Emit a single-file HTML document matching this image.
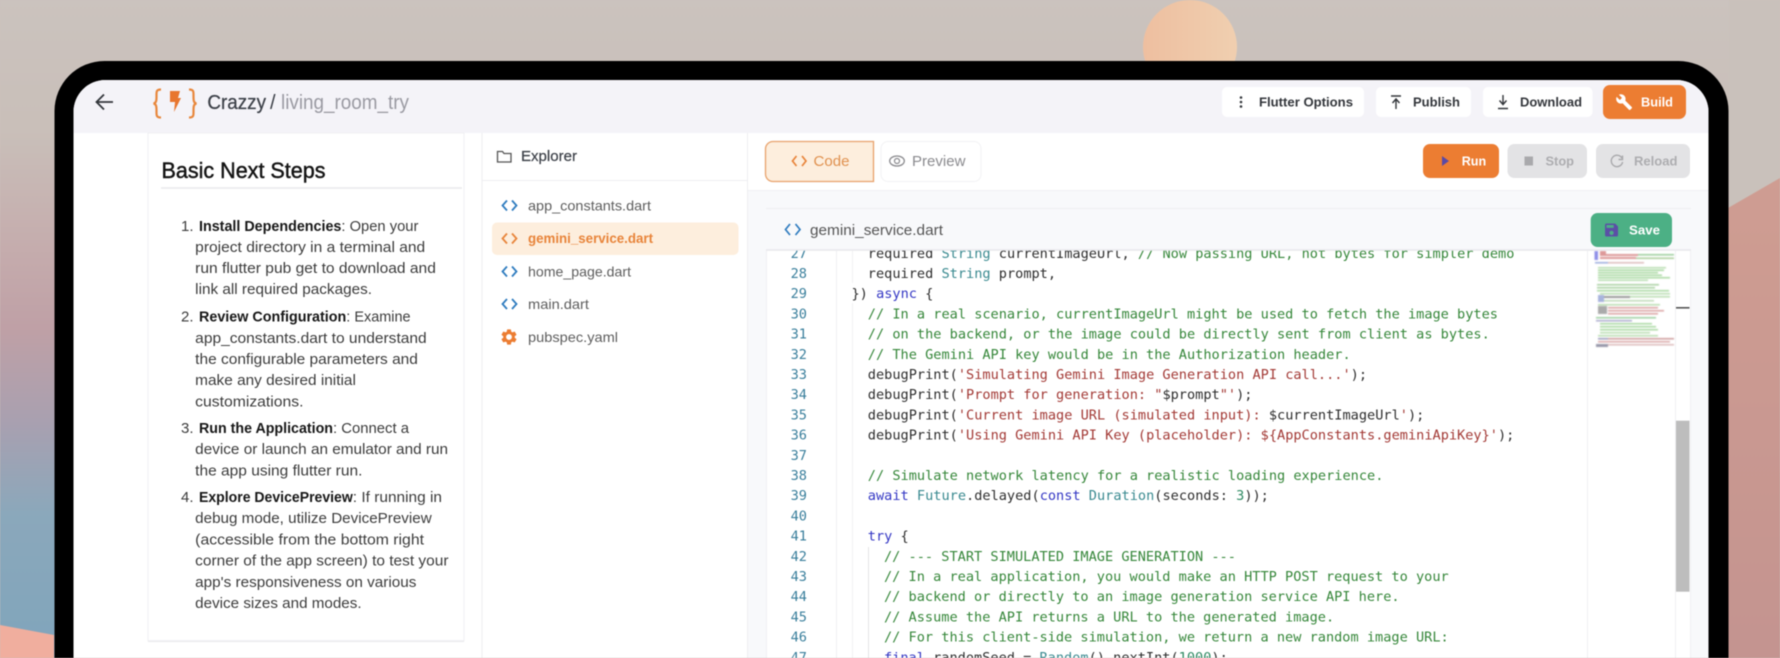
<!DOCTYPE html>
<html><head><meta charset="utf-8"><title>Crazzy</title>
<style>
html,body{margin:0;padding:0;width:1780px;height:658px;overflow:hidden;background:#cbc1bb}
svg{display:block;filter:blur(.5px);font-family:"Liberation Sans",Arial,sans-serif;overflow:hidden}
text{white-space:pre}
.m{font-family:"DejaVu Sans Mono","Liberation Mono",monospace;font-size:13.6px;fill:#2e2e2e}
.n{text-anchor:end;fill:#3a7f9c}
.c{fill:#36873a}.s{fill:#a33a36}.k{fill:#3437c4}.t{fill:#3a8a90}.g{fill:#2f8a63}
.l{font-size:15px;fill:#3c3c3c}
.b{font-size:15px;font-weight:700;fill:#171717}
.f{font-size:14px;fill:#5e5e5e}
.u{font-size:13px;font-weight:700;fill:#33363b}
.w{font-size:13px;font-weight:700;fill:#fff}
.d{font-size:13px;font-weight:700;fill:#adadb0}
</style></head><body>
<svg width="1780" height="658" viewBox="0 0 1780 658" xmlns="http://www.w3.org/2000/svg">
<defs>
<linearGradient id="bg" x1="0" y1="0" x2="0" y2="1">
<stop offset="0" stop-color="#cbc3be"/><stop offset=".2" stop-color="#c9bfb9"/><stop offset=".38" stop-color="#c5acad"/><stop offset=".5" stop-color="#bfa0a6"/><stop offset=".64" stop-color="#a9a0b0"/><stop offset=".78" stop-color="#8ba8bb"/><stop offset="1" stop-color="#80a5bc"/>
</linearGradient>
<linearGradient id="rs" x1="0" y1="0" x2="0" y2="1"><stop offset="0" stop-color="#cf9d92"/><stop offset="1" stop-color="#c49490"/></linearGradient>
<linearGradient id="moon" x1="0" y1="0" x2="1" y2="0"><stop offset="0" stop-color="#eebfa0"/><stop offset="1" stop-color="#f0cfb0"/></linearGradient>
<clipPath id="scr"><path d="M73.500 658V112a32 32 0 0 1 32-32H1676.500a32 32 0 0 1 32 32V658z"/></clipPath>
</defs>
<rect width="1780" height="658" fill="url(#bg)"/>
<rect x="1729" y="0" width="51" height="230" fill="#c9c1bb"/>
<polygon points="0,625 54,635 54,658 0,658" fill="#f0ae9e"/>
<polygon points="1728,208 1780,178 1780,658 1728,658" fill="url(#rs)"/>
<circle cx="1190" cy="47" r="47" fill="url(#moon)"/>
<path d="M54.500 658V111a50 50 0 0 1 50-50H1678.500a50 50 0 0 1 50 50V658z" fill="#000"/>
<g clip-path="url(#scr)">
<rect x="73.500" y="80" width="1635" height="578" fill="#fff"/>
<rect x="73.500" y="80" width="1635" height="53" fill="#f4f3f8"/>
<rect x="748" y="190" width="961" height="468" fill="#f8f9fb"/>
<rect x="748" y="133" width="961" height="57" fill="#fff"/>
<path d="M748 190.500H1709" stroke="#f0f0f3"/>
</g>

<!-- top bar -->
<path d="M113 102H97M104 94.500l-7.500 7.500 7.500 7.500" fill="none" stroke="#33363b" stroke-width="1.800"/>
<g fill="none" stroke="#e8873c" stroke-width="2.200">
<path d="M161 89.500C156 89.500 156.500 92 156.500 96S156.500 103 153.500 103.500C156.500 104 156.500 107 156.500 111S156 117.500 161 117.500"/>
<path d="M189 89.500C194 89.500 193.500 92 193.500 96S193.500 103 196.500 103.500C193.500 104 193.500 107 193.500 111S194 117.500 189 117.500"/>
</g>
<polygon points="170,91 180,91 178,98 181,98 174,112 175,102 170,102" fill="#e8762f"/>
<text x="207.400" y="109" font-size="20" fill="#3c4048" stroke="#3c4048" stroke-width=".25" textLength="58.600" lengthAdjust="spacingAndGlyphs">Crazzy</text>
<text x="270" y="109" font-size="20" fill="#3c4048">/</text>
<text x="281" y="109" font-size="20" fill="#9a9aa2" textLength="128" lengthAdjust="spacingAndGlyphs">living_room_try</text>

<rect x="1222" y="87" width="142" height="30" rx="5" fill="#fff"/>
<circle cx="1241" cy="97.500" r="1.300" fill="#33363b"/><circle cx="1241" cy="102" r="1.300" fill="#33363b"/><circle cx="1241" cy="106.500" r="1.300" fill="#33363b"/>
<text class="u" x="1259" y="106.500" textLength="94" lengthAdjust="spacingAndGlyphs">Flutter Options</text>
<rect x="1376" y="87" width="95" height="30" rx="5" fill="#fff"/>
<path d="M1391 96h10M1396 109v-9M1392.500 103l3.500-4 3.500 4" fill="none" stroke="#33363b" stroke-width="1.400"/>
<text class="u" x="1413" y="106.500" textLength="47" lengthAdjust="spacingAndGlyphs">Publish</text>
<rect x="1483" y="87" width="109.500" height="30" rx="5" fill="#fff"/>
<path d="M1503 95v9M1499.500 100.500l3.500 4 3.500-4M1498 108.500h10" fill="none" stroke="#33363b" stroke-width="1.400"/>
<text class="u" x="1520" y="106.500" textLength="62" lengthAdjust="spacingAndGlyphs">Download</text>
<rect x="1603" y="85" width="83" height="34" rx="7" fill="#ec7d32"/>
<path transform="translate(1615.500,93.500) scale(.72)" fill="#fff" d="M22.700 19l-9.100-9.100c.9-2.300.4-5-1.500-6.900-2-2-5-2.400-7.400-1.300L9 6 6 9 1.600 4.700C.4 7.100.9 10.100 2.900 12.100c1.900 1.900 4.600 2.400 6.900 1.500l9.100 9.100c.4.4 1 .4 1.400 0l2.300-2.300c.5-.4.5-1.100.1-1.400z"/>
<text class="w" x="1641" y="106.500" textLength="32" lengthAdjust="spacingAndGlyphs">Build</text>

<!-- left card -->
<rect x="148" y="133" width="316" height="507.700" fill="#fff" stroke="#f0f0f3"/>
<path d="M148 641.500H464" stroke="#e9e9ec"/>
<text x="161.500" y="178" font-size="22" fill="#141414" stroke="#141414" stroke-width=".45" textLength="164" lengthAdjust="spacingAndGlyphs">Basic Next Steps</text>
<path d="M161 188H462" stroke="#e9e9ec" stroke-width="1.500"/>

<text class="l" x="181" y="231">1.</text>
<text class="b" x="199" y="231" textLength="142.400" lengthAdjust="spacingAndGlyphs">Install Dependencies</text>
<text class="l" x="341.400" y="231" textLength="77" lengthAdjust="spacingAndGlyphs">: Open your</text>
<text class="l" x="195.200" y="252" textLength="230" lengthAdjust="spacingAndGlyphs">project directory in a terminal and</text>
<text class="l" x="195.200" y="273" textLength="240.700" lengthAdjust="spacingAndGlyphs">run flutter pub get to download and</text>
<text class="l" x="195.200" y="294" textLength="176.800" lengthAdjust="spacingAndGlyphs">link all required packages.</text>
<text class="l" x="181" y="321.700">2.</text>
<text class="b" x="199" y="321.700" textLength="147.300" lengthAdjust="spacingAndGlyphs">Review Configuration</text>
<text class="l" x="346.300" y="321.700" textLength="64.300" lengthAdjust="spacingAndGlyphs">: Examine</text>
<text class="l" x="195.200" y="343" textLength="231.500" lengthAdjust="spacingAndGlyphs">app_constants.dart to understand</text>
<text class="l" x="195.200" y="364" textLength="222.700" lengthAdjust="spacingAndGlyphs">the configurable parameters and</text>
<text class="l" x="195.200" y="385" textLength="160.700" lengthAdjust="spacingAndGlyphs">make any desired initial</text>
<text class="l" x="195.200" y="406.700" textLength="108.300" lengthAdjust="spacingAndGlyphs">customizations.</text>
<text class="l" x="181" y="433">3.</text>
<text class="b" x="199" y="433" textLength="134" lengthAdjust="spacingAndGlyphs">Run the Application</text>
<text class="l" x="333" y="433" textLength="76" lengthAdjust="spacingAndGlyphs">: Connect a</text>
<text class="l" x="195.200" y="454" textLength="252.800" lengthAdjust="spacingAndGlyphs">device or launch an emulator and run</text>
<text class="l" x="195.200" y="475.700" textLength="167.200" lengthAdjust="spacingAndGlyphs">the app using flutter run.</text>
<text class="l" x="181" y="502">4.</text>
<text class="b" x="199" y="502" textLength="153.800" lengthAdjust="spacingAndGlyphs">Explore DevicePreview</text>
<text class="l" x="352.800" y="502" textLength="89.200" lengthAdjust="spacingAndGlyphs">: If running in</text>
<text class="l" x="195.200" y="523" textLength="236.500" lengthAdjust="spacingAndGlyphs">debug mode, utilize DevicePreview</text>
<text class="l" x="195.200" y="544.700" textLength="228.800" lengthAdjust="spacingAndGlyphs">(accessible from the bottom right</text>
<text class="l" x="195.200" y="565.700" textLength="253.300" lengthAdjust="spacingAndGlyphs">corner of the app screen) to test your</text>
<text class="l" x="195.200" y="587" textLength="221.200" lengthAdjust="spacingAndGlyphs">app's responsiveness on various</text>
<text class="l" x="195.200" y="608" textLength="166.400" lengthAdjust="spacingAndGlyphs">device sizes and modes.</text>

<!-- explorer -->
<path d="M482 133V658M747.500 133V658" stroke="#eeeef1"/>
<path d="M482 180.500H747" stroke="#eeeef1"/>
<path d="M497.500 151.500h5l1.500 2h7v8.500h-13.500z" fill="none" stroke="#555" stroke-width="1.300"/>
<text x="521" y="161" font-size="14.500" fill="#3c4048" stroke="#3c4048" stroke-width=".2" textLength="56" lengthAdjust="spacingAndGlyphs">Explorer</text>
<rect x="492" y="222.500" width="246.500" height="32.500" rx="5" fill="#fdeedd"/>
<path d="M507 200.500l-4.500 5 4.500 5M512 200.500l4.500 5-4.500 5" fill="none" stroke="#2f7cbf" stroke-width="1.800"/>
<path d="M507 233.500l-4.500 5 4.500 5M512 233.500l4.500 5-4.500 5" fill="none" stroke="#e8843a" stroke-width="1.800"/>
<path d="M507 266.500l-4.500 5 4.500 5M512 266.500l4.500 5-4.500 5" fill="none" stroke="#2f7cbf" stroke-width="1.800"/>
<path d="M507 299l-4.500 5 4.500 5M512 299l4.500 5-4.500 5" fill="none" stroke="#2f7cbf" stroke-width="1.800"/>
<path transform="translate(499.400,327.400) scale(.8)" fill="#ec7d32" d="M19.140 12.940c.04-.3.06-.61.06-.94 0-.32-.02-.64-.07-.94l2.030-1.580c.18-.14.23-.41.12-.61l-1.920-3.320c-.12-.22-.37-.29-.59-.22l-2.390.96c-.5-.38-1.030-.7-1.620-.94l-.36-2.540c-.04-.24-.24-.41-.48-.41h-3.840c-.24 0-.43.17-.47.41l-.36 2.540c-.59.24-1.130.57-1.620.94l-2.390-.96c-.22-.08-.47 0-.59.22L2.740 8.870c-.12.21-.08.47.12.61l2.030 1.580c-.05.3-.09.63-.09.94s.02.64.07.94l-2.030 1.580c-.18.14-.23.41-.12.61l1.920 3.320c.12.22.37.29.59.22l2.390-.96c.5.38 1.030.7 1.620.94l.36 2.540c.05.24.24.41.48.41h3.840c.24 0 .44-.17.47-.41l.36-2.540c.59-.24 1.130-.56 1.620-.94l2.390.96c.22.08.47 0 .59-.22l1.920-3.320c.12-.22.07-.47-.12-.61l-2.010-1.580zM12 15.600c-1.980 0-3.600-1.620-3.600-3.600s1.620-3.600 3.600-3.600 3.600 1.620 3.600 3.600-1.620 3.600-3.600 3.600z"/>
<text class="f" x="528" y="210.500" textLength="123" lengthAdjust="spacingAndGlyphs">app_constants.dart</text>
<text x="528" y="243" font-size="14" font-weight="700" fill="#e8843a" textLength="125" lengthAdjust="spacingAndGlyphs">gemini_service.dart</text>
<text class="f" x="528" y="276.500" textLength="103" lengthAdjust="spacingAndGlyphs">home_page.dart</text>
<text class="f" x="528" y="309" textLength="61" lengthAdjust="spacingAndGlyphs">main.dart</text>
<text class="f" x="528" y="342" textLength="90" lengthAdjust="spacingAndGlyphs">pubspec.yaml</text>

<!-- tabs -->
<rect x="881" y="141.500" width="100" height="40" rx="7" fill="#fff" stroke="#f2f2f4"/>
<path d="M873.500 141.500H773a7.500 7.500 0 0 0-7.500 7.500v25a7.500 7.500 0 0 0 7.500 7.500h100.500z" fill="#fdeedd" stroke="#e8a26c" stroke-width="1.300"/>
<path d="M796.500 156l-4 5 4 5M802 156l4 5-4 5" fill="none" stroke="#e8843a" stroke-width="1.700"/>
<text x="813.500" y="166" font-size="14.500" fill="#e0914f" textLength="36" lengthAdjust="spacingAndGlyphs">Code</text>
<ellipse cx="897" cy="161" rx="7.300" ry="5" fill="none" stroke="#8a8a8e" stroke-width="1.300"/><circle cx="897" cy="161" r="2.500" fill="none" stroke="#8a8a8e" stroke-width="1.200"/>
<text x="912" y="166" font-size="14.500" fill="#8a8a8e" textLength="53.500" lengthAdjust="spacingAndGlyphs">Preview</text>

<rect x="1423" y="144" width="76" height="34" rx="7" fill="#ec7d32"/>
<polygon points="1442,156 1449,161 1442,166" fill="#5a4aa5"/>
<text class="w" x="1461.700" y="165.500" textLength="24.500" lengthAdjust="spacingAndGlyphs">Run</text>
<rect x="1507.500" y="144" width="79.500" height="34" rx="7" fill="#e3e3e5"/>
<rect x="1524.500" y="156.500" width="8.500" height="9" fill="#a9a9ac"/>
<text class="d" x="1545.500" y="165.500" textLength="28.500" lengthAdjust="spacingAndGlyphs">Stop</text>
<rect x="1596" y="144" width="94" height="34" rx="7" fill="#e3e3e5"/>
<path d="M1622 158.200a5.700 5.700 0 1 0 .6 3.800M1622.500 155.500v4h-4" fill="none" stroke="#a9a9ac" stroke-width="1.400"/>
<text class="d" x="1634" y="165.500" textLength="43.500" lengthAdjust="spacingAndGlyphs">Reload</text>

<!-- editor -->
<rect x="766" y="250" width="925" height="408" fill="#fff"/>
<path d="M766.500 208V658M836.500 250V658M1587.500 250V658M1675.500 250V658M1690.500 208V658" stroke="#f0f0f3"/>
<path d="M852.500 250V283M852.500 303V658" stroke="#f2f2f3"/>
<path d="M868.500 547V658" stroke="#e4e4e6"/>

<g class="ln">
<text class="m n" x="807" y="257.800">27</text><text class="m n" x="807" y="278">28</text><text class="m n" x="807" y="298.200">29</text><text class="m n" x="807" y="318.400">30</text><text class="m n" x="807" y="338.600">31</text><text class="m n" x="807" y="358.800">32</text><text class="m n" x="807" y="379">33</text><text class="m n" x="807" y="399.200">34</text><text class="m n" x="807" y="419.400">35</text><text class="m n" x="807" y="439.600">36</text><text class="m n" x="807" y="459.800">37</text><text class="m n" x="807" y="480">38</text><text class="m n" x="807" y="500.200">39</text><text class="m n" x="807" y="520.400">40</text><text class="m n" x="807" y="540.600">41</text><text class="m n" x="807" y="560.800">42</text><text class="m n" x="807" y="581">43</text><text class="m n" x="807" y="601.200">44</text><text class="m n" x="807" y="621.400">45</text><text class="m n" x="807" y="641.600">46</text><text class="m n" x="807" y="661.800">47</text>
</g>
<text class="m" x="867.800" y="257.800">required <tspan class="t">String</tspan> currentImageUrl, <tspan class="c">// Now passing URL, not bytes for simpler demo</tspan></text>
<text class="m" x="867.800" y="278">required <tspan class="t">String</tspan> prompt,</text>
<text class="m" x="851.500" y="298.200">}) <tspan class="k">async</tspan> {</text>
<text class="m c" x="867.800" y="318.400">// In a real scenario, currentImageUrl might be used to fetch the image bytes</text>
<text class="m c" x="867.800" y="338.600">// on the backend, or the image could be directly sent from client as bytes.</text>
<text class="m c" x="867.800" y="358.800">// The Gemini API key would be in the Authorization header.</text>
<text class="m" x="867.800" y="379">debugPrint(<tspan class="s">'Simulating Gemini Image Generation API call...'</tspan>);</text>
<text class="m" x="867.800" y="399.200">debugPrint(<tspan class="s">'Prompt for generation: "</tspan>$prompt<tspan class="s">"'</tspan>);</text>
<text class="m" x="867.800" y="419.400">debugPrint(<tspan class="s">'Current image URL (simulated input): </tspan>$currentImageUrl<tspan class="s">'</tspan>);</text>
<text class="m" x="867.800" y="439.600">debugPrint(<tspan class="s">'Using Gemini API Key (placeholder): ${AppConstants.geminiApiKey}'</tspan>);</text>
<text class="m c" x="867.800" y="480">// Simulate network latency for a realistic loading experience.</text>
<text class="m" x="867.800" y="500.200"><tspan class="k">await</tspan> <tspan class="t">Future</tspan>.delayed(<tspan class="k">const</tspan> <tspan class="t">Duration</tspan>(seconds: <tspan class="g">3</tspan>));</text>
<text class="m" x="867.800" y="540.600"><tspan class="k">try</tspan> {</text>
<text class="m c" x="884" y="560.800">// --- START SIMULATED IMAGE GENERATION ---</text>
<text class="m c" x="884" y="581">// In a real application, you would make an HTTP POST request to your</text>
<text class="m c" x="884" y="601.200">// backend or directly to an image generation service API here.</text>
<text class="m c" x="884" y="621.400">// Assume the API returns a URL to the generated image.</text>
<text class="m c" x="884" y="641.600">// For this client-side simulation, we return a new random image URL:</text>
<text class="m" x="884" y="661.800"><tspan class="k">final</tspan> randomSeed = <tspan class="t">Random</tspan>().nextInt(<tspan class="g">1000</tspan>);</text>

<!-- minimap -->
<g style="filter:blur(.5px)">
<rect x="1594.500" y="251" width="3.500" height="9" fill="#8f8fe8"/>
<rect x="1600" y="251" width="6" height="3" fill="#d99"/>
<rect x="1600" y="254" width="38" height="2" fill="#d99"/><rect x="1638" y="254" width="36" height="1.500" fill="#9c9"/>
<rect x="1600" y="257" width="36" height="2" fill="#d99"/><rect x="1636" y="257.500" width="38" height="1.500" fill="#ac9"/>
<rect x="1595" y="262" width="13" height="1.500" fill="#9ad"/><rect x="1608" y="262" width="36" height="1.500" fill="#dbb"/>
<rect x="1598" y="267" width="68" height="1.500" fill="#b8ddb0"/>
<rect x="1598" y="269.500" width="66" height="1.500" fill="#a8d8a0"/>
<rect x="1598" y="272" width="60" height="1.500" fill="#a8d8a0"/>
<rect x="1598" y="274.500" width="64" height="1.500" fill="#a8d8a0"/>
<rect x="1598" y="277" width="72" height="1.500" fill="#a8d8a0"/>
<rect x="1598" y="279.500" width="50" height="1.500" fill="#b8ddb0"/>
<rect x="1597" y="284" width="62" height="1.500" fill="#a8d0a0"/>
<rect x="1597" y="287" width="58" height="1.500" fill="#a8d0a0"/>
<rect x="1597" y="290" width="72" height="1.500" fill="#a8d8a0"/>
<rect x="1600" y="293" width="70" height="1.500" fill="#b8ddb0"/>
<rect x="1598" y="295" width="6" height="7" fill="#a8b4dd"/><rect x="1604" y="296" width="26" height="2" fill="#999"/><rect x="1630" y="296" width="40" height="1.500" fill="#b8ddb0"/>
<rect x="1604" y="300" width="50" height="1.500" fill="#bdd9b5"/>
<rect x="1598" y="304" width="62" height="1.500" fill="#b8ddb0"/>
<rect x="1598" y="306" width="9" height="8" fill="#aaa"/><rect x="1608" y="307" width="50" height="1.500" fill="#d9a0a0"/>
<rect x="1608" y="310" width="56" height="1.500" fill="#d9a0a0"/>
<rect x="1608" y="313" width="50" height="1.500" fill="#d9a0a0"/>
<rect x="1596" y="317" width="60" height="1.500" fill="#9ccfa0"/>
<rect x="1596" y="320" width="36" height="1.500" fill="#aac"/>
<rect x="1600" y="323" width="52" height="1.500" fill="#a8d8a0"/>
<rect x="1600" y="326" width="56" height="1.500" fill="#a8d8a0"/>
<rect x="1600" y="329" width="58" height="1.500" fill="#a8d8a0"/>
<rect x="1600" y="332" width="50" height="1.500" fill="#b8ddb0"/>
<rect x="1598" y="335" width="60" height="1.500" fill="#b8ddb0"/>
<rect x="1598" y="338" width="10" height="1.500" fill="#99b"/><rect x="1608" y="338" width="66" height="1.500" fill="#cc9a9a"/>
<rect x="1598" y="341" width="72" height="1.500" fill="#d9a8a8"/>
<rect x="1596" y="344" width="12" height="3" fill="#99a"/><rect x="1608" y="344" width="66" height="1.500" fill="#dbb"/>
</g>
<rect x="1676" y="420.700" width="13.500" height="171" fill="#bdbdbd"/>
<rect x="1676" y="307" width="13.500" height="1.600" fill="#555"/>

<!-- editor header on top -->
<rect x="766" y="208" width="925" height="42" fill="#f8f9fb"/>
<path d="M766 208.500H1691" stroke="#eeeef1"/>
<path d="M766 250H1691" stroke="#e8e8ec" stroke-width="1.500"/>
<path d="M790 224l-4.500 5.500 4.500 5.500M795.500 224l4.500 5.500-4.500 5.500" fill="none" stroke="#2f7cbf" stroke-width="1.700"/>
<text x="810" y="235" font-size="14.500" fill="#555" textLength="133" lengthAdjust="spacingAndGlyphs">gemini_service.dart</text>
<rect x="1590.700" y="213" width="81.300" height="34" rx="7" fill="#4cb085"/>
<path transform="translate(1602.900,221.400) scale(.72)" fill="#5b4fa6" d="M17 3H5c-1.110 0-2 .9-2 2v14c0 1.100.89 2 2 2h14c1.100 0 2-.9 2-2V7l-4-4zm-5 16c-1.660 0-3-1.340-3-3s1.340-3 3-3 3 1.340 3 3-1.340 3-3 3zm3-10H5V5h10v4z"/>
<text class="w" x="1629" y="234.500" textLength="31" lengthAdjust="spacingAndGlyphs">Save</text>
</svg>
</body></html>
